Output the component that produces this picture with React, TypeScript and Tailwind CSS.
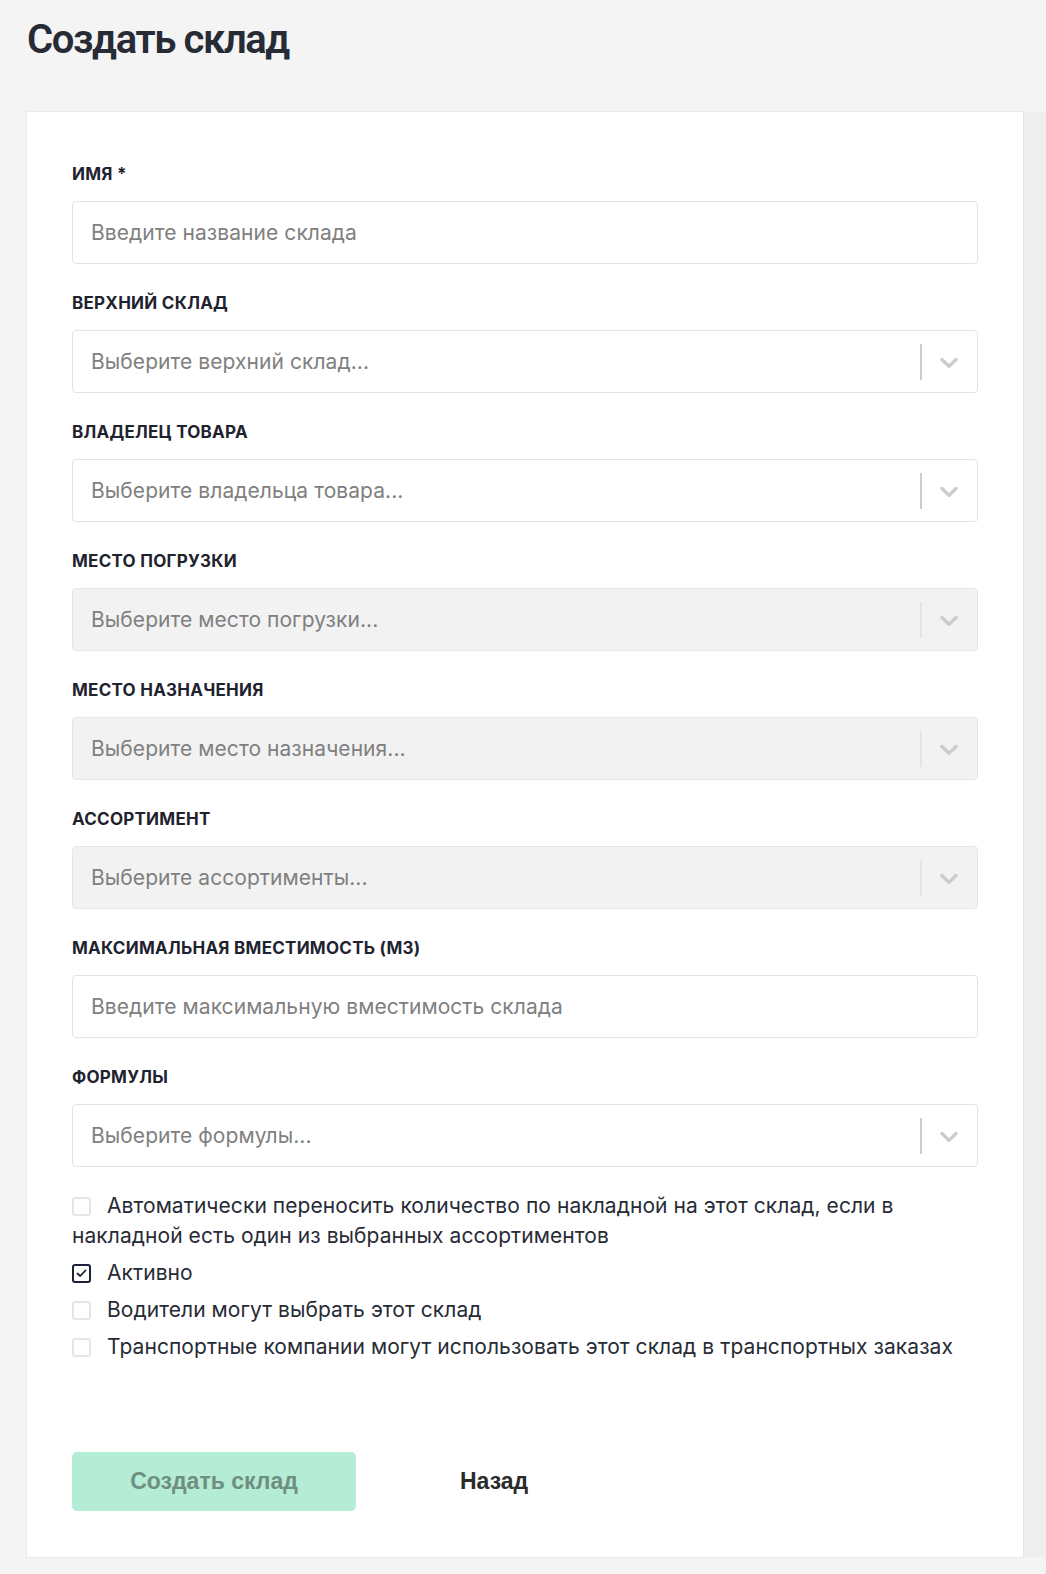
import React from "react";

const Chevron = () => (
  <svg width="30" height="30" viewBox="0 0 20 20" fill="#cccccc" aria-hidden="true">
    <path d="M4.516 7.548c0.436-0.446 1.043-0.481 1.576 0l3.908 3.747 3.908-3.747c0.533-0.481 1.141-0.446 1.574 0 0.436 0.445 0.408 1.197 0 1.615-0.406 0.418-4.695 4.502-4.695 4.502-0.217 0.223-0.502 0.335-0.787 0.335s-0.57-0.112-0.789-0.335c0 0-4.287-4.084-4.695-4.502s-0.436-1.17 0-1.615z" />
  </svg>
);

const Label = ({ children }: { children: React.ReactNode }) => (
  <div className="h-5 text-[17px] leading-5 font-bold uppercase tracking-[0.015em] text-[#1f2330]">
    {children}
  </div>
);

const TextInput = ({ placeholder }: { placeholder: string }) => (
  <div className="h-[63px] rounded-[4px] border border-[#e3e3e3] bg-white flex items-center px-[18px]">
    <span className="text-[21px] text-[#808080] tracking-[0.003em]">{placeholder}</span>
  </div>
);

const Select = ({ placeholder, disabled }: { placeholder: string; disabled?: boolean }) => (
  <div
    className={
      disabled
        ? "h-[63px] rounded-[4px] border border-[#e6e6e6] bg-[#f2f2f2] flex items-center pl-[18px]"
        : "h-[63px] rounded-[4px] border border-[#e3e3e3] bg-white flex items-center pl-[18px]"
    }
  >
    <span className="flex-1 text-[21px] text-[#808080] tracking-[0.003em]">{placeholder}</span>
    <div className={disabled ? "w-[2px] h-9 bg-[#e4e4e4]" : "w-[2px] h-9 bg-[#cccccc]"} />
    <div className="w-[55px] flex items-center justify-center pr-[2px]">
      <Chevron />
    </div>
  </div>
);

const Field = ({ label, children }: { label: React.ReactNode; children: React.ReactNode }) => (
  <div className="flex flex-col gap-[17px]">
    <Label>{label}</Label>
    {children}
  </div>
);

const Box = ({ checked }: { checked?: boolean }) =>
  checked ? (
    <span className="inline-block align-[-3px] w-[19px] h-[19px] rounded-[3px] border-2 border-[#1c2238] mr-[16px]">
      <svg className="block mx-auto mt-[3px]" width="11" height="9" viewBox="0 0 11 9" fill="none">
        <path d="M1.5 4.5L4.2 7L9.5 1.5" stroke="#1c2238" strokeWidth="1.8" strokeLinecap="round" strokeLinejoin="round" />
      </svg>
    </span>
  ) : (
    <span className="inline-block align-[-3px] w-[19px] h-[19px] rounded-[3px] border-2 border-[#e6e6e6] mr-[16px]" />
  );

export default function App() {
  return (
    <div
      className="min-h-[1574px] bg-[#f4f4f4]"
      style={{ fontFamily: "Inter, 'Noto Sans', sans-serif" }}
    >
      <div className="pl-[27px] pt-[16px] h-[112px]">
        <h1
          className="text-[40px] leading-[48px] font-semibold tracking-[-0.035em] text-[#272b35]"
          style={{ fontFamily: "Roboto, Inter, sans-serif", fontWeight: 600 }}
        >
          Создать склад
        </h1>
      </div>
      <div className="flex items-stretch">
        <div className="ml-[27px] w-[996px] bg-white shadow-[0_0_0_1px_#e9e9e9] px-[45px] pt-[52px] pb-[46px]">
          <div className="flex flex-col gap-[29px]">
            <Field label="Имя *">
              <TextInput placeholder="Введите название склада" />
            </Field>
            <Field label="Верхний склад">
              <Select placeholder="Выберите верхний склад..." />
            </Field>
            <Field label="Владелец товара">
              <Select placeholder="Выберите владельца товара..." />
            </Field>
            <Field label="Место погрузки">
              <Select placeholder="Выберите место погрузки..." disabled />
            </Field>
            <Field label="Место назначения">
              <Select placeholder="Выберите место назначения..." disabled />
            </Field>
            <Field label="Ассортимент">
              <Select placeholder="Выберите ассортименты..." disabled />
            </Field>
            <Field label="Максимальная вместимость (м3)">
              <TextInput placeholder="Введите максимальную вместимость склада" />
            </Field>
            <Field label="Формулы">
              <Select placeholder="Выберите формулы..." />
            </Field>
          </div>
          <div className="mt-[24px] flex flex-col gap-[7px] text-[21px] leading-[30px] text-[#272b36] tracking-[0.003em]">
            <div className="pr-[60px]">
              <Box />
              Автоматически переносить количество по накладной на этот склад, если в накладной есть один из выбранных ассортиментов
            </div>
            <div>
              <Box checked />
              Активно
            </div>
            <div>
              <Box />
              Водители могут выбрать этот склад
            </div>
            <div>
              <Box />
              Транспортные компании могут использовать этот склад в транспортных заказах
            </div>
          </div>
          <div className="mt-[90px] flex items-center">
            <button
              className="w-[284px] h-[59px] rounded-[5px] bg-[#b4ecd6] text-[23px] font-bold text-[#6e8f80]"
              style={{ fontFamily: "'Liberation Sans', Arial, sans-serif" }}
            >
              Создать склад
            </button>
            <button
              className="ml-[104px] text-[23px] font-bold text-[#2b2b2b]"
              style={{ fontFamily: "'Liberation Sans', Arial, sans-serif" }}
            >
              Назад
            </button>
          </div>
        </div>
        <div className="flex-1 bg-[#eeeeee] border-l border-[#e4e4e4]" />
      </div>
    </div>
  );
}
